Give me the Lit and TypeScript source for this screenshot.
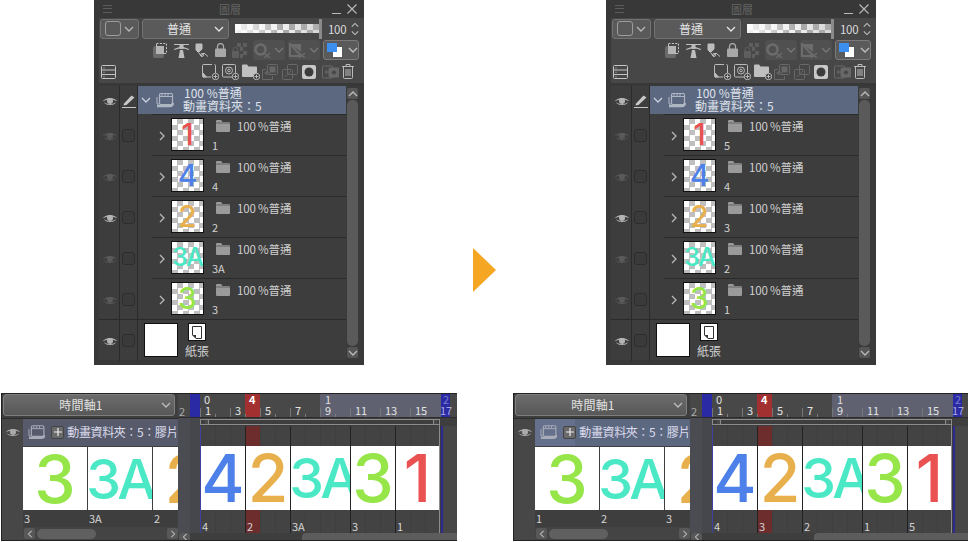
import { LitElement, html, svg, css } from "lit";
import { customElement, property } from "lit/decorators.js";

const FONT = css`"Noto Sans CJK TC", "Noto Sans CJK JP", sans-serif`;

const chev = (d: "down" | "right" | "left" | "up", w = 10) => {
  const p = { down: "M1 3l4 4 4-4", up: "M1 7l4-4 4 4", right: "M3 1l4 4-4 4", left: "M7 1L3 5l4 4" }[d];
  return html`<svg width=${w} height="10" viewBox="0 0 10 10" fill="none" stroke="currentColor" stroke-width="1.3"><path d=${p}/></svg>`;
};
const eye = html`<svg width="16" height="10" viewBox="0 0 16 10"><path d="M.5 5.5C3.5 .8 12.5 .8 15.5 5.5 12.5 3.2 3.5 3.2 .5 5.5Z" fill="currentColor"/><circle cx="8" cy="5" r="3" fill="currentColor"/><path d="M2.5 6.8C5 9.2 11 9.2 13.5 6.8" fill="none" stroke="currentColor"/></svg>`;
const pen = html`<svg width="14" height="14" viewBox="0 0 14 14"><path d="M2 9.5 9.5 1.5 12.5 3.5 4.5 11 1.5 11.5Z" fill="currentColor"/><path d="M0 13.5h14" stroke="currentColor"/></svg>`;
const folder = html`<svg width="14" height="13" viewBox="0 0 14 13"><path d="M0 2a1 1 0 0 1 1-1h4l1.5 2H13a1 1 0 0 1 1 1v8a1 1 0 0 1-1 1H1a1 1 0 0 1-1-1Z" fill="currentColor"/><path d="M0 4h14" stroke="#3c3c3c" stroke-width=".6"/></svg>`;
const animFolder = html`<svg width="18" height="15" viewBox="0 0 18 15" fill="none" stroke="currentColor"><path d="M3 11H1V4" /><rect x="3.5" y=".5" width="13" height="11" rx="1.5" stroke-width="1.2"/><path d="M4 3.5h12M6 1v2M9 1v2M12 1v2" /><path d="M1 13h13a3 3 0 0 0 3-3" stroke-width="2.4"/></svg>`;
const plus = html`<svg width="8" height="8" viewBox="0 0 8 8"><path d="M0 4h8M4 0v8" stroke="currentColor" stroke-width="1.2"/></svg>`;
const badge = svg`<circle cx="13.5" cy="12.500" r="3.200" fill="#3a3a3a" stroke="#bbb"/><path d="M11.500 12.500h4M13.500 10.500v4" stroke="#bbb"/>`;

const rowIcons = {
  clip: html`<svg width="15" height="15" viewBox="0 0 15 15"><rect x="0" y="3" width="11" height="12" rx="2" fill="#6a6a6a"/><rect x="3.500" y=".5" width="10" height="10" fill="#474747" stroke="#c8c8c8" stroke-dasharray="2 1.400"/><rect x="3" y="3" width="8" height="8" fill="#b4b4b4"/></svg>`,
  tower: html`<svg width="15" height="15" viewBox="0 0 15 15" fill="#bdbdbd"><path d="M0 1h15v1H9.500v2L15 6v1L9.500 5.500v.5h-4v-.5L0 7V6l5.500-2V2H0Z"/><path d="M6 7h3l1.500 8h-6Z"/></svg>`,
  ref: html`<svg width="14" height="15" viewBox="0 0 14 15" fill="none" stroke="#bdbdbd"><path d="M1 1h6v5L3.500 9.500 1 7Z" fill="#bdbdbd"/><path d="M4 10l2 3 3-3 4 3.500" /><circle cx="7" cy="12" r="1.500"/></svg>`,
  lock: html`<svg width="11" height="14" viewBox="0 0 11 14"><path d="M2.500 6V3.500a3 3 0 0 1 6 0V6" fill="none" stroke="#a8a8a8" stroke-width="1.300"/><rect y="5.500" width="11" height="8.500" rx="1" fill="#a8a8a8"/></svg>`,
  lockChecker: html`<svg width="15" height="15" viewBox="0 0 15 15" fill="#5e5e5e"><path d="M1 9V7a2.500 2.500 0 0 1 5 0v2" fill="none" stroke="#5e5e5e"/><rect y="8" width="7" height="7" rx="1"/><path d="M5 0h4v4H5ZM11 0h4v4h-4ZM8 4h3v4H8ZM11 8h4v4h-4ZM8 11h3v4H8Z"/></svg>`,
  mask: html`<svg width="17" height="15" viewBox="0 0 17 15"><circle cx="6.500" cy="6.500" r="5" fill="none" stroke="#6c6c6c" stroke-width="2.500"/><path d="M10 10l6 5M16 10l-6 5" stroke="#6c6c6c" stroke-width="1.300"/></svg>`,
  ruler: html`<svg width="17" height="15" viewBox="0 0 17 15"><path d="M1 1v12h11Z" fill="none" stroke="#6c6c6c" stroke-width="2"/><path d="M1 1 12 1 12 9Z" fill="#6c6c6c"/><path d="M10 10l6 5M16 10l-6 5" stroke="#6c6c6c" stroke-width="1.300"/></svg>`,
  list: html`<svg width="15" height="14" viewBox="0 0 15 14" fill="none" stroke="#c4c4c4"><rect x=".5" y=".5" width="14" height="13" rx="1"/><path d="M.5 5h14M.5 9.500h14M2.500 3h1M2.500 7.200h1M2.500 11.700h1"/></svg>`,
  raster: html`<svg width="17" height="16" viewBox="0 0 17 16" fill="none" stroke="#bbb"><path d="M10 .5H1.500a1 1 0 0 0-1 1V12a1 1 0 0 0 1 1H9M13.500 9V1.500a1 1 0 0 0-1-1"/><path d="M1 9l3.500 4H1Z" fill="#bbb"/>${badge}</svg>`,
  vector: html`<svg width="17" height="16" viewBox="0 0 17 16" fill="none" stroke="#bbb"><rect x=".5" y=".5" width="13" height="12.500" rx="1"/><circle cx="7" cy="6.500" r="3.500"/><circle cx="7" cy="6.500" r="1.300"/>${badge}</svg>`,
  newFolder: html`<svg width="18" height="16" viewBox="0 0 18 16"><path d="M0 1.500a1 1 0 0 1 1-1h4L6.500 2.500H14a1 1 0 0 1 1 1V12a1 1 0 0 1-1 1H1a1 1 0 0 1-1-1Z" fill="#c0c0c0"/><g transform="translate(1 0)">${badge}</g></svg>`,
  copyDown: html`<svg width="16" height="16" viewBox="0 0 16 16" fill="none" stroke="#686868"><rect x="5.500" y=".5" width="10" height="10" rx="1"/><rect x="8" y="3" width="5" height="5" fill="#686868"/><path d="M4 5.500H.5v10h10V12M2.500 9h6M5 7 3 9l2 2"/></svg>`,
  copyUp: html`<svg width="16" height="16" viewBox="0 0 16 16" fill="none" stroke="#686868"><rect x="5.500" y=".5" width="10" height="10" rx="1"/><rect x=".5" y="5.500" width="10" height="10" rx="1"/><path d="M3 13l6-6"/></svg>`,
  maskBtn: html`<svg width="14" height="14" viewBox="0 0 14 14"><rect width="14" height="14" rx="2" fill="#c8c8c8"/><circle cx="7" cy="7" r="4.500" fill="#3c3c3c"/></svg>`,
  cam: html`<svg width="17" height="14" viewBox="0 0 17 14" fill="none" stroke="#686868"><rect x=".5" y="1" width="10" height="12" rx="1"/><rect x="7" y="3" width="10" height="9" rx="1" fill="#686868"/><circle cx="12" cy="7.500" r="2.500" fill="#474747"/><path d="M3 7h5M5 5 3 7l2 2"/></svg>`,
  trash: html`<svg width="12" height="15" viewBox="0 0 12 15" fill="none" stroke="#bbb"><path d="M0 2.500h12M4 2.500v-2h4v2M1.500 2.500v11a1 1 0 0 0 1 1h7a1 1 0 0 0 1-1v-11M4 5v7M6 5v7M8 5v7"/></svg>`,
};

@customElement("digit-text")
class DigitText extends LitElement {
  @property() value = "";
  static styles = css`
    :host { display: block; font-family: Inter, sans-serif; font-weight: 500; white-space: nowrap; text-align: center; }
    span { display: block; }
    .c1 { color: #ea5252; } .c2 { color: #e8b04c; } .c3 { color: #96e64a; }
    .c3A { color: #4be8c6; letter-spacing: -0.07em; font-size: 0.84em; margin-left: -0.03em; } .c4 { color: #4d80e8; }
  `;
  render() {
    return html`<span class="c${this.value}">${this.value}</span>`;
  }
}

@customElement("layer-panel")
class LayerPanel extends LitElement {
  @property({ type: Array }) names: string[] = [];
  static styles = css`
    :host { display: flex; flex-direction: column; width: 265px; height: 365px; padding-left: 5px; background: #383838; font-family: ${FONT}; color: #d0d0d0; font-size: 12px; line-height: 12px; flex: none; }
    .title { height: 18px; display: flex; align-items: center; padding: 0 7px 0 9px; color: #666; background: #383838; margin-left: -5px; }
    .ham { width: 9px; height: 6px; border-top: 1px solid #5c5c5c; border-bottom: 1px solid #5c5c5c; }
    .ham::after { content: ""; display: block; height: 1px; background: #5c5c5c; margin-top: 2px; }
    .title b { flex: 1; text-align: center; font-weight: 400; font-size: 11px; margin-left: 16px; }
    .min { width: 9px; height: 1px; background: #b8b8b8; margin: 8px 6px 0 0; }
    .x { display: flex; color: #b8b8b8; }
    .tools { height: 65px; background: #474747; display: flex; flex-direction: column; }
    .r1 { height: 21px; display: flex; align-items: center; padding-left: 1px; }
    .btn { height: 20px; background: #5a5a5a; border: 1px solid #727272; border-radius: 3px; box-sizing: border-box; display: flex; align-items: center; color: #b8b8b8; }
    .shape { width: 39px; padding: 0 4px; justify-content: space-between; }
    .shape i { display: block; width: 14px; height: 13px; border: 1.5px solid #9c9c9c; border-radius: 3px; }
    .blend { width: 87px; margin-left: 3px; padding: 0 4px 0 24px; justify-content: space-between; color: #e4e4e4; }
    .opa { width: 84px; height: 9px; margin-left: 6px; background: linear-gradient(90deg, rgba(255,255,255,.9), rgba(255,255,255,.15) 60%, rgba(190,190,190,.5)), repeating-conic-gradient(#9a9a9a 0 25%, #ececec 0 50%) 0 0/12px 12px; }
    .handle { width: 3px; height: 20px; background: #8a8a8a; }
    .num { margin-left: 6px; font-size: 11.5px; width: 19px; color: #dcdcdc; letter-spacing: -.3px; }
    .spin { display: flex; flex-direction: column; margin-left: 3px; color: #c0c0c0; height: 18px; justify-content: center; }
    .spin svg { height: 8px; }
    .r2 { height: 20px; display: flex; align-items: center; justify-content: flex-end; padding-right: 5px; margin-top: 1px; }
    .r2 > svg { margin-right: 6px; }
    .dd { width: 32px; height: 20px; background: #505050; border-radius: 3px; margin-right: 3px; display: flex; align-items: center; gap: 3px; color: #777; justify-content: center; }
    .color { width: 36px; height: 20px; background: #5a5a5a; border: 1px solid #7a7a7a; border-radius: 3px; box-sizing: border-box; display: flex; align-items: center; padding-left: 3px; color: #c0c0c0; gap: 6px; }
    .sw { width: 15px; height: 14px; background: linear-gradient(#3d8fef,#3d8fef) 0 0/10px 9px no-repeat, linear-gradient(#fff,#fff) 6px 4px/9px 10px no-repeat; }
    .r3 { height: 23px; display: flex; align-items: center; padding-left: 2px; }
    .ic-wrap { margin-left: 86px; display: flex; align-items: center; }
    .slot { width: 20px; display: flex; flex: none; }
    .list { flex: none; margin-top: 3px; display: flex; height: 274px; background: #3d3d3d; }
    .rows { width: 247px; }
    .row { display: grid; grid-template-columns: 21px 18px 1fr; }
    .eye { border-right: 1px solid #2a2a2a; display: flex; align-items: center; justify-content: center; color: #b4b4b4; padding-left: 1px; }
    .eye.dim { color: #5a5a5a; }
    .lk { border-right: 1px solid #2a2a2a; display: flex; align-items: center; justify-content: center; color: #c8c8c8; }
    .box { width: 11px; height: 11px; border: 1px solid #2d2d2d; border-radius: 3px; background: #3a3a3a; }
    .head { height: 29px; }
    .headmain { display: flex; background: #5c6780; height: 28px; align-items: center; color: #dfe3ea; }
    .headmain .cv { margin-left: 1px; width: 14px; display: flex; justify-content: center; color: #c8d0dc; }
    .headmain .ai { margin-left: 3px; color: #aeb6c4; display: flex; }
    .headtx { margin: -2px 0 0 9px; font-size: 12px; line-height: 13px; white-space: nowrap; }
    .headtx div:first-child { padding-left: 1px; }
    .hl { height: 1px; background: #2a2a2a; margin-left: 14px; }
    .lr { height: 41px; }
    .lr .c { margin-left: 14px; border-bottom: 1px solid #2a2a2a; display: flex; height: 41px; box-sizing: border-box; }
    .cv2 { width: 19px; display: flex; justify-content: center; align-items: center; color: #b8b8b8; padding-top: 1px; }
    .th { width: 33px; height: 33px; margin-top: 3px; border: 1px solid #111; box-sizing: border-box; background: repeating-conic-gradient(#bfbfbf 0 25%, #fff 0 50%) 0 0/11px 11px; font-size: 30px; line-height: 31px; }
    .meta { padding-left: 8px; display: flex; flex-direction: column; }
    .mode { display: flex; align-items: center; gap: 7px; margin: 4px 0 0 4px; height: 13px; color: #9a9a9a; }
    .mode span { color: #d0d0d0; font-size: 11.5px; letter-spacing: -.15px; }
    .nm { margin-top: 7px; font-size: 11px; color: #d0d0d0; }
    .paper { height: 41px; border-top: 1px solid #2a2a2a; margin-top: -1px; }
    .pc { display: flex; height: 40px; padding-left: 6px; }
    .white { width: 34px; height: 34px; background: #fff; border: 1px solid #111; box-sizing: border-box; margin-top: 3px; }
    .pinfo { display: flex; flex-direction: column; margin-left: 7px; align-items: center; padding-top: 3px; }
    .pi { width: 18px; height: 18px; background: #fff; border: 1px solid #111; box-sizing: border-box; display: flex; align-items: center; justify-content: center; }
    .pl { margin-top: 4px; }
    .sb { flex: 1; display: flex; flex-direction: column; padding: 2px 6px 2px 1px; background: #3a3a3a; }
    .sbb { height: 11px; background: #555; border-radius: 2px; color: #bbb; display: flex; align-items: center; justify-content: center; flex: none; }
    .sbt { width: 11px; flex: 1; background: #5a5a5a; border-radius: 5px; margin: 1px 0 1px; }
  `;
  private row(thumb: string, name: string, bright: boolean) {
    return html`<div class="row lr">
      <div class="eye ${bright ? "" : "dim"}">${eye}</div>
      <div class="lk"><div class="box"></div></div>
      <div class="c">
        <div class="cv2">${chev("right")}</div>
        <div class="th"><digit-text .value=${thumb}></digit-text></div>
        <div class="meta">
          <div class="mode">${folder}<span>100 %普通</span></div>
          <div class="nm">${name}</div>
        </div>
      </div>
    </div>`;
  }
  render() {
    const thumbs = ["1", "4", "2", "3A", "3"];
    const tools = [rowIcons.raster, rowIcons.vector, rowIcons.newFolder, rowIcons.copyDown, rowIcons.copyUp, rowIcons.maskBtn, rowIcons.cam, rowIcons.trash];
    return html`
      <div class="title"><div class="ham"></div><b>圖層</b><div class="min"></div><div class="x"><svg width="10" height="10" viewBox="0 0 10 10"><path d="M.5.5l9 9M9.500.5l-9 9" stroke="currentColor" stroke-width="1.200"/></svg></div></div>
      <div class="tools">
        <div class="r1">
          <div class="btn shape"><i></i>${chev("down")}</div>
          <div class="btn blend"><span>普通</span>${chev("down")}</div>
          <div class="opa"></div><div class="handle"></div>
          <div class="num">100</div>
          <div class="spin">${chev("up")}${chev("down")}</div>
        </div>
        <div class="r2">
          ${rowIcons.clip}${rowIcons.tower}${rowIcons.ref}${rowIcons.lock}${rowIcons.lockChecker}
          <div class="dd">${rowIcons.mask}${chev("down")}</div>
          <div class="dd">${rowIcons.ruler}${chev("down")}</div>
          <div class="color"><div class="sw"></div>${chev("down")}</div>
        </div>
        <div class="r3">
          ${rowIcons.list}
          <div class="ic-wrap">${tools.map((t) => html`<div class="slot">${t}</div>`)}</div>
        </div>
      </div>
      <div class="list">
        <div class="rows">
          <div class="row head">
            <div class="eye">${eye}</div>
            <div class="lk">${pen}</div>
            <div>
              <div class="headmain">
                <div class="cv">${chev("down")}</div>
                <div class="ai">${animFolder}</div>
                <div class="headtx"><div>100 %普通</div><div>動畫資料夾：5</div></div>
              </div>
              <div class="hl"></div>
            </div>
          </div>
          ${thumbs.map((t, i) => this.row(t, this.names[i], i === 2))}
          <div class="row paper">
            <div class="eye">${eye}</div>
            <div class="lk"><div class="box"></div></div>
            <div class="pc">
              <div class="white"></div>
              <div class="pinfo">
                <div class="pi"><svg width="10" height="13" viewBox="0 0 10 13"><path d="M.5.5h9v12H4L.5 9Z" fill="#fff" stroke="#333"/><path d="M.5 9H4v3.500Z" fill="#333"/></svg></div>
                <div class="pl">紙張</div>
              </div>
            </div>
          </div>
        </div>
        <div class="sb">
          <div class="sbb">${chev("up")}</div>
          <div class="sbt"></div>
          <div class="sbb">${chev("down")}</div>
        </div>
      </div>
    `;
  }
}

@customElement("anim-timeline")
class AnimTimeline extends LitElement {
  @property({ type: Array }) leftLabels: string[] = [];
  @property({ type: Array }) rightLabels: string[] = [];
  @property({ type: Boolean }) active = false;
  static styles = css`
    :host { display: flex; width: 456px; height: 148px; box-sizing: border-box; flex: none; background: #3e3e3e; border-left: 1px solid #222; border-top: 1px solid #222; border-bottom: 1px solid #222; font-family: ${FONT}; color: #d4d4d4; font-size: 12px; line-height: 12px; }
    .left { width: 176px; display: flex; flex-direction: column; flex: none; overflow: hidden; }
    .sel { height: 22px; margin: 0 1px; width: 172px; box-sizing: border-box; border: 1px solid #7e7e7e; border-radius: 3px; background: linear-gradient(#6c6c6c,#585858); display: flex; align-items: center; justify-content: center; position: relative; color: #e0e0e0; }
    .sel span { padding-right: 16px; letter-spacing: .2px; }
    .sel svg { position: absolute; right: 3px; color: #bbb; }
    .la { margin-top: 2px; flex: 1; display: flex; border-top: 1px solid #2c2c2c; min-height: 0; }
    .ey { width: 21px; background: #474747; color: #aaa; display: flex; justify-content: center; padding-top: 8px; box-sizing: border-box; flex: none; }
    .cc { flex: 1; min-width: 0; display: flex; flex-direction: column; }
    .hd { height: 27px; background: #565a6a; display: flex; align-items: center; padding-left: 5px; color: #a8acb8; white-space: nowrap; }
    .hd.on { background: linear-gradient(90deg,#65718c 0 40px,#5c6780 40px); }
    .pl { width: 11px; height: 11px; border-radius: 2px; background: #6a6a6a; border: 1px solid #444; color: #eee; display: flex; align-items: center; justify-content: center; margin: 0 3px 0 6px; flex: none; }
    .hd span { color: #dde; letter-spacing: -.4px; }
    .cells { display: flex; height: 64px; margin-top: 1px; overflow: hidden; }
    .cell { width: 64px; flex: none; background: #fff; margin-right: 1px; font-size: 66px; line-height: 64px; overflow: hidden; }
    .lb { display: flex; height: 17px; overflow: hidden; }
    .lb div { width: 64px; flex: none; margin-right: 1px; padding-left: 1px; box-sizing: border-box; font-size: 11px; height: 17px; line-height: 16px; }
    .hsb { height: 13px; background: #444; display: flex; align-items: center; padding-left: 1px; gap: 2px; }
    .hb { width: 11px; height: 11px; background: #585858; color: #bbb; border-radius: 2px; display: flex; align-items: center; justify-content: center; flex: none; }
    .ht { width: 59px; height: 10px; background: #606060; border-radius: 5px; }
    .hs { flex: 1; }
    .gut { width: 22px; flex: none; display: flex; flex-direction: column; background: #484a4e; }
    .gt { height: 24px; display: flex; background: #484848; border-bottom: 1px solid #2c2c2c; box-sizing: border-box; }
    .gt div:first-child { width: 12px; padding: 12px 0 0 1px; box-sizing: border-box; font-size: 11px; line-height: 11px; color: #aaa; }
    .gt div:last-child { width: 10px; background: #2a2aa4; }
    .gm { flex: 1; background: linear-gradient(90deg,#4a4c52 0 12px,#45474c 12px); }
    .gb { height: 7px; background: #3e3e3e; color: #bbb; display: flex; }
    .gb div { width: 11px; background: #585858; border-radius: 2px 2px 0 0; margin-left: 1px; display: flex; align-items: center; justify-content: center; overflow: hidden; }
    .main { width: 257px; flex: none; display: flex; flex-direction: column; min-width: 0; }
    .ruler { height: 24px; display: grid; border-bottom: 1px solid #2c2c2c; box-sizing: border-box; }
    .ruler > * { grid-area: 1 / 1; }
    .bands { display: flex; }
    .bd { box-sizing: border-box; background: #484848; font-size: 11px; color: #e0e0e0; padding: 0 0 0 4px; line-height: 11px; }
    .bd.f { width: 45px; }
    .bd.cur { width: 15px; background: #a23030; padding-left: 4px; font-weight: 700; color: #fff; }
    .bd.g { width: 60px; }
    .bd.sec { width: 121px; background: #5f6170; padding-left: 5px; }
    .bd.bl { width: 9px; background: #2a2aa4; color: #7c7ccc; padding-left: 2px; }
    .bd.end { width: 7px; padding: 0; }
    .t { height: 23px; width: 240px; background-repeat: no-repeat; background-image: repeating-linear-gradient(90deg,#767676 0 1px,transparent 1px 30px), repeating-linear-gradient(90deg,transparent 0 15px,#7c7c7c 15px 16px,transparent 16px 30px); background-size: 100% 9px, 100% 3px; background-position: 0 100%, 0 100%; }
    .nums { display: flex; align-self: end; height: 12px; }
    .nums div { width: 30px; flex: none; padding-left: 5px; box-sizing: border-box; font-size: 11px; line-height: 11px; color: #e4e4e4; }
    .nums div:last-child { width: 17px; padding-left: 0; color: #a8a8dc; letter-spacing: -.2px; }
    .rng { height: 8px; padding-top: 1px; display: flex; box-sizing: border-box; width: 240px; }
    .bar { flex: 1; height: 6px; border: 1px solid #8c8c8c; border-right: 0; box-sizing: border-box; display: flex; justify-content: space-between; }
    .bar i { display: block; width: 3px; height: 4px; background: #4a4a4a; border-right: 1px solid #8c8c8c; margin-left: 4px; }
    .bar i:last-child { border-left: 1px solid #8c8c8c; border-right: 0; margin: 0 2px 0 0; }
    .rng b { width: 1px; height: 7px; background: #8c8c8c; }
    .body { flex: 1; display: flex; min-height: 0; }
    .cols { display: flex; width: 240px; border-right: 1px solid #8c8c8c; box-sizing: border-box; flex: none; }
    .col { box-sizing: border-box; border-left: 1px solid #222; display: flex; flex-direction: column; background: repeating-linear-gradient(90deg,#434343 0 14px,#3e3e3e 14px 15px); }
    .col.first { border-left-color: #4040a0; }
    .col.cur { background: linear-gradient(#6e2d2d,#6e2d2d) 0 0/14px 100% no-repeat, repeating-linear-gradient(90deg,#434343 0 14px,#3e3e3e 14px 15px); }
    .trk { height: 20px; flex: none; }
    .big { height: 64px; background: #fff; font-size: 66px; line-height: 64px; overflow: hidden; flex: none; }
    .cap { padding: 9px 0 0 1px; font-size: 11px; line-height: 14px; flex: none; }
    .rail { flex: 1; display: flex; background: #474747; }
    .rail i { display: block; width: 1px; background: #3a3a3a; }
    .rail b { display: block; width: 2px; background: #2a2a90; }
    .msb { height: 7px; background: #3e3e3e; padding-left: 102px; flex: none; }
    .msb div { height: 7px; background: #5c5c5c; border-radius: 4px 0 0 0; }
  `;
  render() {
    const thumbs = ["4", "2", "3A", "3", "1"];
    const widths = [45, 45, 60, 45, 44];
    const odd = [1, 3, 5, 7, 9, 11, 13, 15, 17];
    return html`
      <div class="left">
        <div class="sel"><span>時間軸1</span>${chev("down")}</div>
        <div class="la">
          <div class="ey">${eye}</div>
          <div class="cc">
            <div class="hd ${this.active ? "on" : ""}">
              ${animFolder}<div class="pl">${plus}</div><span>動畫資料夾：5：膠片</span>
            </div>
            <div class="cells">
              ${["3", "3A", "2"].map((t) => html`<div class="cell"><digit-text .value=${t}></digit-text></div>`)}
            </div>
            <div class="lb">${this.leftLabels.map((t) => html`<div>${t}</div>`)}</div>
            <div class="hsb"><div class="hb">${chev("left", 8)}</div><div class="ht"></div><div class="hs"></div><div class="hb">${chev("right", 8)}</div></div>
          </div>
        </div>
      </div>
      <div class="gut">
        <div class="gt"><div>2</div><div></div></div>
        <div class="gm"></div>
        <div class="gb"><div>${chev("left", 8)}</div></div>
      </div>
      <div class="main">
        <div class="ruler">
          <div class="bands">
            <div class="bd f">0</div><div class="bd cur">4</div><div class="bd g"></div><div class="bd sec">1</div><div class="bd bl">2</div><div class="bd end"></div>
          </div>
          <div class="t"></div>
          <div class="nums">${odd.map((n) => html`<div>${n}</div>`)}</div>
        </div>
        <div class="rng"><div class="bar"><i></i><i></i></div><b></b></div>
        <div class="body">
          <div class="cols">
            ${thumbs.map((t, i) => html`<div class="col ${i === 0 ? "first" : ""} ${i === 1 ? "cur" : ""}" style="width:${widths[i]}px">
              <div class="trk"></div>
              <div class="big"><digit-text .value=${t}></digit-text></div>
              <div class="cap">${this.rightLabels[i]}</div>
            </div>`)}
          </div>
          <div class="rail"><i></i><b></b><div></div></div>
        </div>
        <div class="msb"><div></div></div>
      </div>
    `;
  }
}

@customElement("app-root")
class AppRoot extends LitElement {
  static styles = css`
    :host { display: block; width: 968px; height: 542px; overflow: hidden; background: #fff; }
    .top { display: flex; height: 365px; padding-left: 94px; }
    .arrow { margin: 248px 110px 0 109px; width: 23px; height: 44px; flex: none; }
    .bottom { display: flex; margin-top: 28px; padding-left: 1px; gap: 56px; }
  `;
  render() {
    return html`
      <div class="top">
        <layer-panel .names=${["1", "4", "2", "3A", "3"]}></layer-panel>
        <svg class="arrow" viewBox="0 0 23 44"><path d="M0 0 23 22 0 44Z" fill="#f5a623"/></svg>
        <layer-panel .names=${["5", "4", "3", "2", "1"]}></layer-panel>
      </div>
      <div class="bottom">
        <anim-timeline .leftLabels=${["3", "3A", "2"]} .rightLabels=${["4", "2", "3A", "3", "1"]}></anim-timeline>
        <anim-timeline active .leftLabels=${["1", "2", "3"]} .rightLabels=${["4", "3", "2", "1", "5"]}></anim-timeline>
      </div>
    `;
  }
}
